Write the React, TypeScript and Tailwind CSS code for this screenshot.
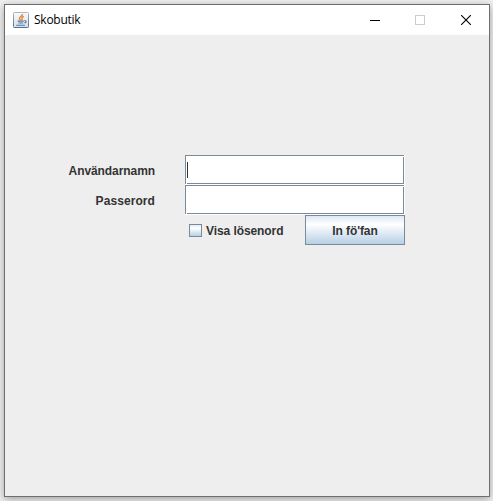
import React from 'react';

function JavaIcon() {
  return (
    <svg width="16" height="16" viewBox="0 0 16 16" className="shrink-0">
      <defs>
        <linearGradient id="tile" x1="0" y1="0" x2="0" y2="1">
          <stop offset="0" stopColor="#a9b9c8" />
          <stop offset="1" stopColor="#4f7090" />
        </linearGradient>
        <linearGradient id="face" x1="0" y1="0" x2="0" y2="1">
          <stop offset="0" stopColor="#fafafa" />
          <stop offset="1" stopColor="#d3dfe9" />
        </linearGradient>
      </defs>
      <rect x="0.5" y="0.5" width="15" height="15" rx="0.8" fill="url(#face)" stroke="url(#tile)" />
      <path d="M9.6 2.2C9.3 4 6.4 4.6 6.5 6.4c.1.8.7 1.2.9 1.8M10.9 4.4C9 5 8.5 5.8 9 6.6c.3.6 0 1-.5 1.5" fill="none" stroke="#e8842c" strokeWidth="1.4" />
      <path d="M4.6 9.1h6.2M5.4 11h4.8M11.2 8.8c2.8-.4 2.3 1.8.2 2.2M3.3 13.2h8.6" fill="none" stroke="#56799b" strokeWidth="1.15" />
    </svg>
  );
}

function TitleBar() {
  return (
    <header className="flex h-[30px] items-center bg-white pl-2 font-['Open_Sans','Noto_Sans',sans-serif] text-xs text-black">
      <JavaIcon />
      <span className="ml-[5px] tracking-[-0.25px]">Skobutik</span>
      <div className="ml-auto flex h-full">
        <button aria-label="Minimera" className="flex w-[45px] items-center justify-center">
          <svg width="10" height="10" shapeRendering="crispEdges"><path d="M0 5h10v1H0z" /></svg>
        </button>
        <button aria-label="Maximera" className="flex w-[46px] items-center justify-center pr-px">
          <svg width="10" height="10" shapeRendering="crispEdges"><rect x=".5" y=".5" width="9" height="9" fill="none" stroke="#ccc" /></svg>
        </button>
        <button aria-label="Stäng" className="flex w-[46px] items-center justify-center">
          <svg width="10" height="10"><path d="M0 0l10 10M10 0L0 10" stroke="#000" strokeWidth="1.1" /></svg>
        </button>
      </div>
    </header>
  );
}

function Field({ caret = false }: { caret?: boolean }) {
  return (
    <div className="h-[30px] w-[220px] border-r border-b border-white">
      <div className="relative h-full border border-[#7a8a99] bg-white p-px before:absolute before:-bottom-px before:left-0 before:h-px before:w-px before:bg-white after:absolute after:top-0 after:-right-px after:h-px after:w-px after:bg-white">
        <div className="h-full pt-[5px]">
          {caret && <div className="h-4 w-px bg-[#333]" />}
        </div>
      </div>
    </div>
  );
}

export default function App() {
  return (
    <div className="h-[501px] w-[493px] overflow-hidden bg-[#f0f0f0] pt-1 pl-1">
      <main className="h-[493px] w-[486px] border border-[#6e6e6e] bg-[#eee] shadow-[0_2px_8px_rgba(0,0,0,0.35)]">
        <TitleBar />
        <form className="pt-[120px] font-['Liberation_Sans',Arial,sans-serif] text-xs font-bold text-[#333]">
          <div className="flex h-[30px] items-center">
            <label className="w-[150px] pt-px text-right tracking-[-0.08px]">Användarnamn</label>
            <div className="ml-[30px]"><Field caret /></div>
          </div>
          <div className="flex h-[30px] items-center">
            <label className="w-[150px] pt-px text-right tracking-[0.08px]">Passerord</label>
            <div className="ml-[30px]"><Field /></div>
          </div>
          <div className="flex h-[30px] items-center">
            <label className="ml-[184px] flex w-[116px] items-center gap-1">
              <span className="h-[13px] w-[13px] border border-[#7a8a99] bg-linear-to-b from-[#e2ebf3] via-white via-30% to-[#b8cfe5]" />
              <span className="pt-px tracking-[-0.08px]">Visa lösenord</span>
            </label>
            <button type="button" className="h-[30px] w-[100px] border border-[#7a8a99] bg-linear-to-b from-[#dde8f3] via-white via-30% to-[#b8cfe5] pt-px tracking-[-0.1px]">
              In fö'fan
            </button>
          </div>
        </form>
      </main>
    </div>
  );
}
